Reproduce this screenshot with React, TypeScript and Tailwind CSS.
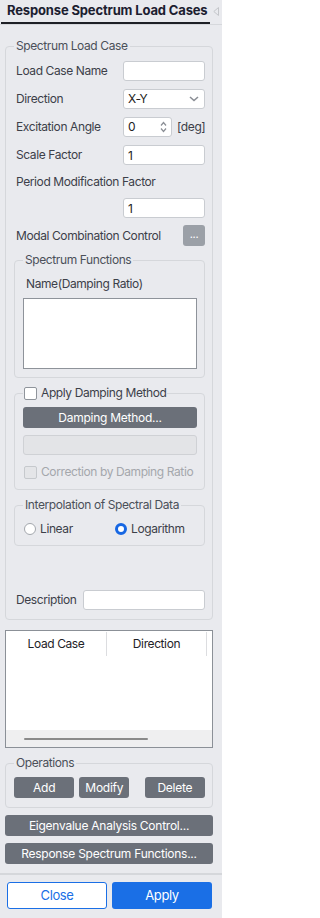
import React from "react";

const font = "font-['Inter','Noto_Sans',sans-serif] tracking-[-0.4px]";
const label = "text-[12px] leading-4 text-[#3c4049]";
const box = "h-5 rounded-[3px] border border-[#c9ccd1] bg-white px-[4px] text-[12px] leading-[18px] text-[#222]";
const darkBtn = "flex items-center justify-center rounded-[3px] bg-[#6b7079] text-[12px] tracking-[-0.25px] text-white";
const fieldset = "rounded-[4px] border border-[#d5d7db]";
const legend = "px-[2px] text-[12px] leading-4 text-[#4b5059]";

function Row({ name, children }: { name: string; children: React.ReactNode }) {
  return (
    <div className="flex h-5 items-center justify-between">
      <span className={`${label} pl-[2px]`}>{name}</span>
      {children}
    </div>
  );
}

function Chevron() {
  return (
    <svg width="10" height="6" viewBox="0 0 10 6" className="text-[#8a8e95]">
      <path d="M1 1l4 3.5L9 1" fill="none" stroke="currentColor" strokeWidth="1.6" />
    </svg>
  );
}

function Spin() {
  return (
    <svg width="7" height="12" viewBox="0 0 7 12" className="text-[#8a8e95]">
      <path d="M1 4.5l2.5-3 2.5 3M1 7.5l2.5 3 2.5-3" fill="none" stroke="currentColor" strokeWidth="1.2" />
    </svg>
  );
}

function Check({ disabled }: { disabled?: boolean }) {
  return (
    <span
      className={`inline-block h-[13px] w-[13px] shrink-0 rounded-[2px] border ${
        disabled ? "border-[#c6c9cd] bg-[#e4e5e8]" : "border-[#8f949b] bg-white"
      }`}
    />
  );
}

export default function App() {
  return (
    <div className={`${font} h-[918px] w-[222px] overflow-hidden bg-[#e9eaee]`}>
      {/* tab bar */}
      <div className="flex h-[25px] items-stretch border-b border-[#d6d8dc]">
        <div className="ml-px flex w-[209px] items-center whitespace-nowrap border-b-2 border-[#1e2026] pl-[6px] text-[13px] font-bold tracking-[-0.15px] text-[#1c2030]">
          Response Spectrum Load Cases
        </div>
        <div className="flex flex-1 items-center justify-center pb-[2px]">
          <svg width="6" height="9" viewBox="0 0 6 9">
            <path d="M5.5 0.5v8L0.8 4.5z" fill="none" stroke="#c4c6ca" strokeWidth="1" />
          </svg>
        </div>
      </div>

      <fieldset className={`${fieldset} ml-[5px] mt-[13px] w-[208px] pb-[9px] pl-[8px] pr-[7px]`}>
        <legend className={legend}>Spectrum Load Case</legend>
        <div className="flex flex-col pt-[7px]">
          <Row name="Load Case Name">
            <input readOnly value="" className={`${box} w-[82px]`} />
          </Row>
          <div className="mt-[8px]">
            <Row name="Direction">
              <div className={`${box} flex w-[82px] items-center justify-between pr-[5px]`}>
                <span>X-Y</span>
                <Chevron />
              </div>
            </Row>
          </div>
          <div className="mt-[8px]">
            <Row name="Excitation Angle">
              <div className="flex items-center">
                <div className={`${box} flex w-[49px] items-center justify-between pr-[4px]`}>
                  <span>0</span>
                  <Spin />
                </div>
                <span className={`${label} ml-[5px] w-[28px]`}>[deg]</span>
              </div>
            </Row>
          </div>
          <div className="mt-[8px]">
            <Row name="Scale Factor">
              <input readOnly value="1" className={`${box} w-[82px]`} />
            </Row>
          </div>
          <div className={`${label} mt-[9px] pl-[2px]`}>Period Modification Factor</div>
          <div className="mt-[8px] flex justify-end">
            <input readOnly value="1" className={`${box} w-[82px]`} />
          </div>
          <div className="mt-[7px] flex h-[21px] items-center justify-between">
            <span className={`${label} pl-[2px]`}>Modal Combination Control</span>
            <button className="flex h-[21px] w-[22px] items-center justify-center rounded-[3px] bg-[#9ba0a7] pb-[3px] text-[11px] text-white">
              ...
            </button>
          </div>

          <fieldset className={`${fieldset} mt-[6px] pb-[8px] pl-[8px] pr-[7px]`}>
            <legend className={legend}>Spectrum Functions</legend>
            <div className="pt-[8px]">
              <div className={`${label} pl-[3px]`}>Name(Damping Ratio)</div>
              <div className="mt-[6px] h-[71px] border border-[#8e939a] bg-white" />
            </div>
          </fieldset>

          <fieldset className={`${fieldset} mt-[7px] pb-[9px] pl-[8px] pr-[7px]`}>
            <legend className="flex items-center gap-[4px] px-[1px]">
              <Check />
              <span className={`${label} text-[#3c4049]`}>Apply Damping Method</span>
            </legend>
            <div className="flex flex-col pt-[6px]">
              <button className={`${darkBtn} h-[21px] w-full`}>Damping Method...</button>
              <div className="mt-[7px] h-5 rounded-[3px] border border-[#cfd1d5] bg-[#e3e4e7]" />
              <div className="mt-[9px] flex h-4 items-center gap-[4px] whitespace-nowrap pl-[1px]">
                <Check disabled />
                <span className="text-[12px] leading-4 text-[#a4a7ac]">Correction by Damping Ratio</span>
              </div>
            </div>
          </fieldset>

          <fieldset className={`${fieldset} mt-[7px] pb-[8px] pl-[8px] pr-[7px]`}>
            <legend className={legend}>Interpolation of Spectral Data</legend>
            <div className="grid grid-cols-2 pt-[8px]">
              <label className="flex h-4 items-center gap-[4px] pl-[1px]">
                <span className="inline-block h-[12px] w-[12px] rounded-full border border-[#a3a7ad] bg-white" />
                <span className={label}>Linear</span>
              </label>
              <label className="flex h-4 items-center gap-[4px] pl-[5px]">
                <span className="inline-block h-[12px] w-[12px] rounded-full border-[3.5px] border-[#1767e3] bg-white" />
                <span className={label}>Logarithm</span>
              </label>
            </div>
          </fieldset>

          <div className="mt-[44px] flex h-5 items-center justify-between">
            <span className={`${label} pl-[2px]`}>Description</span>
            <input readOnly value="" className={`${box} w-[122px]`} />
          </div>
        </div>
      </fieldset>

      {/* table */}
      <div className="ml-[5px] mt-[10px] flex h-[118px] w-[208px] flex-col overflow-hidden border border-[#8b9097] bg-white">
        <div className="flex h-[26px] shrink-0 py-px">
          <div className="flex w-[101px] shrink-0 items-center justify-center border-r border-[#dcdde0] text-[12px] text-[#1f2328]">
            Load Case
          </div>
          <div className="flex w-[100px] shrink-0 items-center justify-center border-r border-[#dcdde0] text-[12px] text-[#1f2328]">
            Direction
          </div>
          <div className="w-[60px] shrink-0" />
        </div>
        <div className="flex-1" />
        <div className="flex h-[17px] shrink-0 items-center bg-[#efeff0] pl-[18px]">
          <div className="h-[2px] w-[124px] rounded-full bg-[#8a8a8a]" />
        </div>
      </div>

      <fieldset className={`${fieldset} ml-[5px] mt-[7px] w-[208px] pb-[9px] pl-[8px] pr-[7px]`}>
        <legend className={legend}>Operations</legend>
        <div className="grid grid-cols-3 gap-[5px] pt-[6px]">
          <button className={`${darkBtn} h-[21px]`}>Add</button>
          <button className={`${darkBtn} h-[21px] w-[50px] justify-self-start`}>Modify</button>
          <button className={`${darkBtn} h-[21px]`}>Delete</button>
        </div>
      </fieldset>

      <button className={`${darkBtn} ml-[5px] mt-[7px] h-[21px] w-[208px]`}>Eigenvalue Analysis Control...</button>
      <button className={`${darkBtn} ml-[5px] mt-[7px] h-[21px] w-[208px]`}>Response Spectrum Functions...</button>

      <div className="mt-[9px] h-[2px] w-full bg-[#d5d7db]" />

      <div className="mt-[7px] flex gap-[5px] px-[7px]">
        <button className="h-[27px] w-[100px] rounded-[3px] border border-[#1a6fe6] bg-white text-[13px] text-[#1a6fe6]">
          Close
        </button>
        <button className="h-[27px] w-[100px] rounded-[3px] bg-[#1a6fe6] text-[13px] text-white">Apply</button>
      </div>
    </div>
  );
}
